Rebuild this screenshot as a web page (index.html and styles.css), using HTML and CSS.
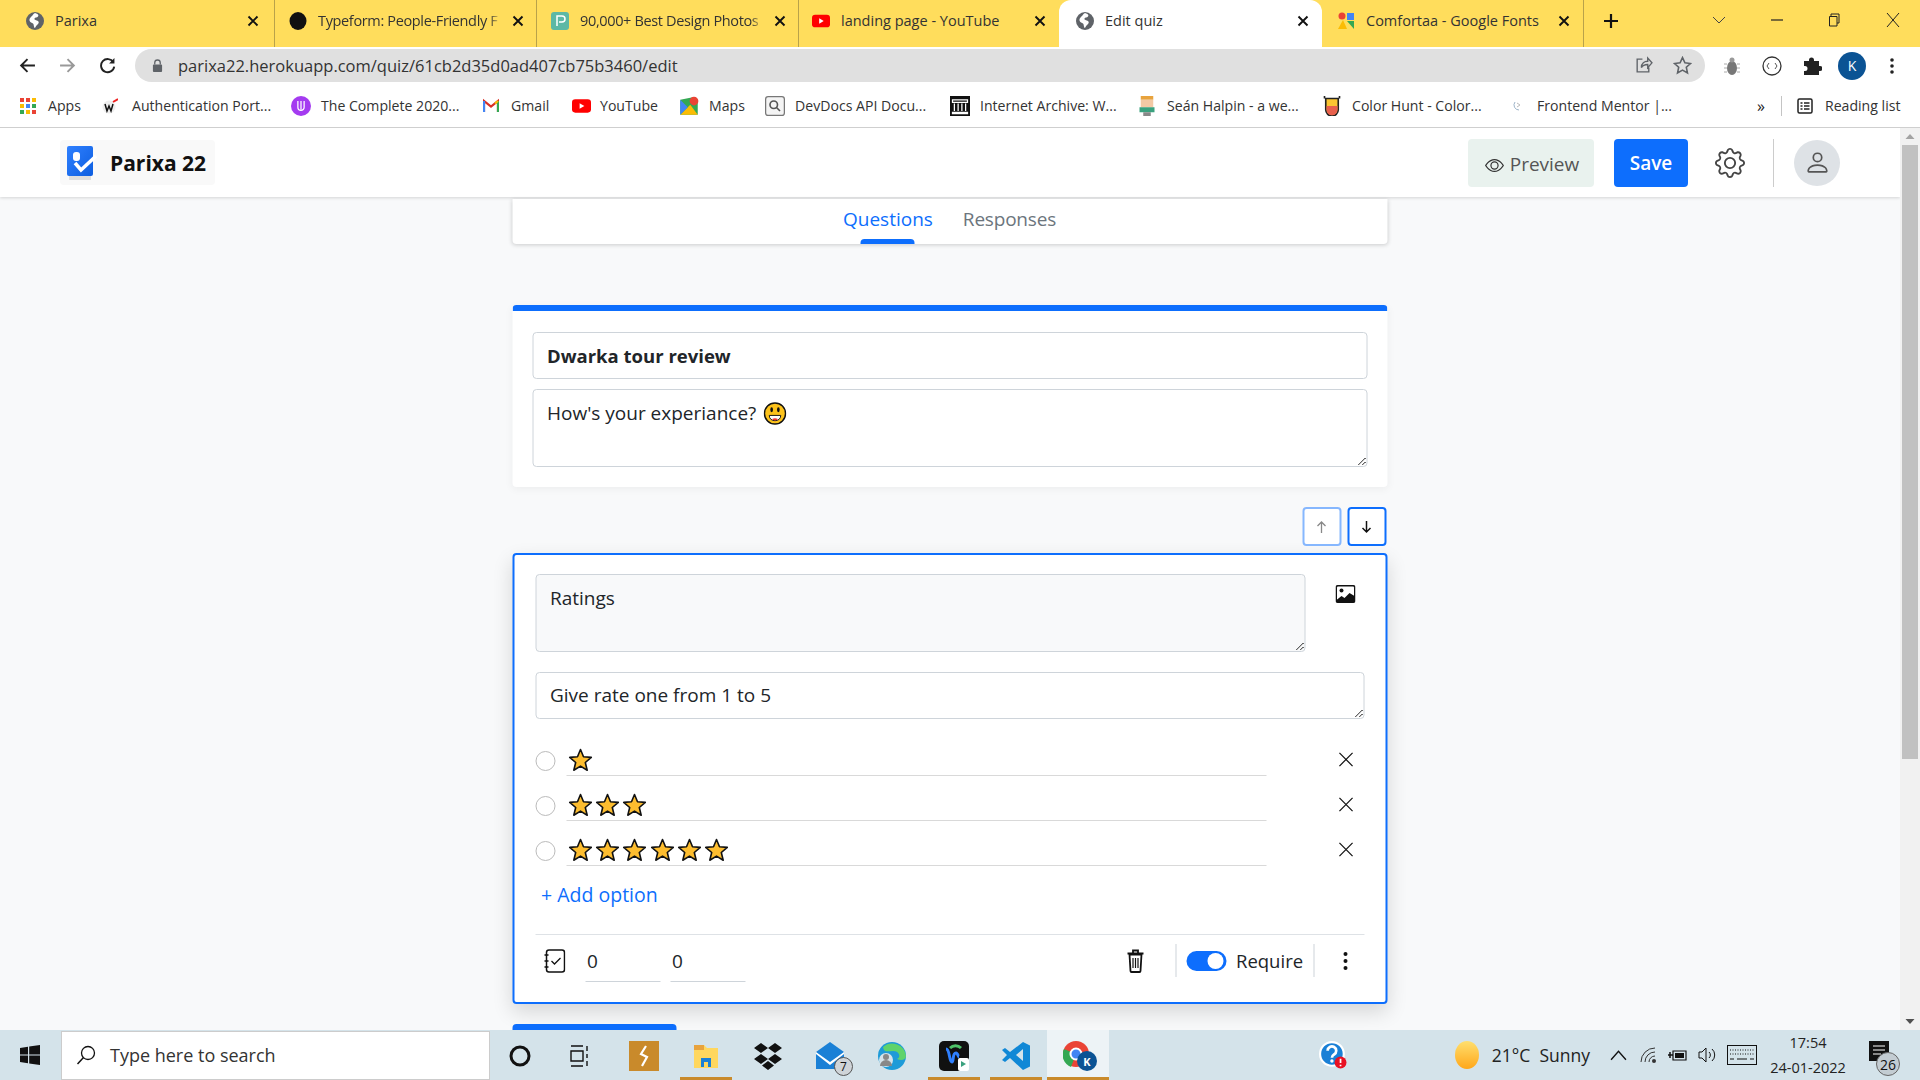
FILE: index.html
```html
<!DOCTYPE html>
<html lang="en">
<head>
<meta charset="utf-8">
<title>Edit quiz</title>
<link rel="stylesheet" href="styles.css">
</head>
<body>
<svg class="defs" aria-hidden="true">
  <symbol id="globe" viewBox="0 0 18 18"><circle cx="9" cy="9" r="9" fill="#5f6368"/><path d="M9 1c3 1 4 2 3 3.500s-3 .5-3.500 2 2 1.500 3.500 2.500.5 3-1 4-1.500 3-2.500 3c-1-2-.5-3.500-1.500-4.500s-3-1-3.500-3S5 5 6 4s1-2 3-3z" fill="#fff"/></symbol>
  <symbol id="tabx" viewBox="0 0 12 12"><path d="M1.500 1.500l9 9m0-9l-9 9" stroke="#111" stroke-width="1.900" fill="none"/></symbol>
  <symbol id="yt" viewBox="0 0 20 14"><rect width="20" height="14" rx="3.500" fill="#f00"/><path d="M8 4l5 3-5 3z" fill="#fff"/></symbol>
  <symbol id="star" viewBox="0 0 24 24"><path d="M12 1.500l3 7.300 7.800.6-6 5.100 1.900 7.700L12 18.100 5.300 22.200l1.900-7.700-6-5.100 7.800-.6z" fill="#fdbd2f" stroke="#111" stroke-width="1.600" stroke-linejoin="round"/></symbol>
  <symbol id="cross" viewBox="0 0 16 16"><path d="M1 1l14 14m0-14L1 15" stroke="#111" stroke-width="1.300" fill="none"/></symbol>
</svg>

<div class="tabstrip">
  <div class="tab tab-first"><svg class="tabicon"><use href="#globe"/></svg><span class="tabtitle">Parixa</span><svg class="tabclose"><use href="#tabx"/></svg></div>
  <div class="tab tab-fade"><svg class="tabicon" viewBox="0 0 18 18"><ellipse cx="9" cy="9" rx="8.500" ry="9" fill="#111"/></svg><span class="tabtitle">Typeform: People-Friendly F</span><svg class="tabclose"><use href="#tabx"/></svg></div>
  <div class="tab tab-fade"><svg class="tabicon" viewBox="0 0 18 18"><rect width="18" height="18" rx="3" fill="#5cb8a5"/><path d="M6 14V4h5a3 3 0 0 1 0 6H8" stroke="#fff" stroke-width="1.500" fill="none"/></svg><span class="tabtitle">90,000+ Best Design Photos</span><svg class="tabclose"><use href="#tabx"/></svg></div>
  <div class="tab tab-short"><svg class="tabicon"><use href="#yt"/></svg><span class="tabtitle">landing page - YouTube</span><svg class="tabclose"><use href="#tabx"/></svg></div>
  <div class="tab tab-active"><svg class="tabicon"><use href="#globe"/></svg><span class="tabtitle">Edit quiz</span><svg class="tabclose"><use href="#tabx"/></svg></div>
  <div class="tab tab-last"><svg class="tabicon" viewBox="0 0 18 18"><path d="M1 17L6 8l4 9z" fill="#fbbc04"/><circle cx="5" cy="4" r="3.500" fill="#ea4335"/><rect x="10" y="1" width="7" height="7" fill="#4285f4"/><path d="M10 9h7v8z" fill="#34a853"/></svg><span class="tabtitle">Comfortaa - Google Fonts</span><svg class="tabclose"><use href="#tabx"/></svg></div>
  <div class="newtab"><svg class="ic16" viewBox="0 0 16 16"><path d="M8 1v14M1 8h14" stroke="#111" stroke-width="2.200"/></svg></div>
  <div class="winctl">
    <svg class="ic14" viewBox="0 0 14 14"><path d="M1 4l6 6 6-6" stroke="#444" fill="none"/></svg>
    <svg class="ic14" viewBox="0 0 14 14"><path d="M1 7h12" stroke="#222" stroke-width="1.200"/></svg>
    <svg class="ic14" viewBox="0 0 14 14"><path d="M3 3V1h8v9H9M1.500 3.500h7.500v9.500H1.500z" stroke="#222" fill="none"/></svg>
    <svg class="ic14" viewBox="0 0 14 14"><path d="M1 0l12 14M13 0L1 14" stroke="#222" fill="none"/></svg>
  </div>
</div>

<div class="toolbar">
  <svg class="navicon" viewBox="0 0 16 16"><path d="M15 8H2M8 2L2 8l6 6" stroke="#222" stroke-width="1.800" fill="none"/></svg>
  <svg class="navicon" viewBox="0 0 16 16"><path d="M1 8h13M8 2l6 6-6 6" stroke="#999" stroke-width="1.800" fill="none"/></svg>
  <svg class="navicon" viewBox="0 0 16 16"><path d="M13.500 5A6.200 6.200 0 1 0 14.300 9" stroke="#222" stroke-width="1.800" fill="none"/><path d="M14.500 1v5h-5z" fill="#222"/></svg>
  <div class="omnibox">
    <svg class="lock" viewBox="0 0 12 14"><path d="M3 6V4a3 3 0 0 1 6 0v2" stroke="#5f6368" stroke-width="1.400" fill="none"/><rect x="1" y="6" width="10" height="8" rx="1" fill="#5f6368"/></svg>
    <span class="url">parixa22.herokuapp.com/quiz/61cb2d35d0ad407cb75b3460/edit</span>
    <svg class="omniicon" viewBox="0 0 18 18"><path d="M8 3H3v12h11v-4M7 11c0-4 3-6 6-6V2l4 4.500L13 11V8c-3 0-5 1-6 3z" stroke="#5f6368" stroke-width="1.300" fill="none"/></svg>
    <svg class="omniicon" viewBox="0 0 18 18"><path d="M9 1.500l2.300 5 5.200.6-3.900 3.500 1.100 5.400L9 13.300 4.300 16l1.100-5.400L1.500 7.100l5.200-.6z" stroke="#5f6368" stroke-width="1.500" fill="none"/></svg>
  </div>
  <div class="exts">
    <svg class="ic20" viewBox="0 0 20 20"><ellipse cx="10" cy="12" rx="5" ry="7" fill="#777"/><circle cx="10" cy="4" r="2.500" fill="#999"/><path d="M2 8h3M2 12h3M2 16h3M15 8h3M15 12h3M15 16h3" stroke="#aaa"/></svg>
    <svg class="ic20" viewBox="0 0 20 20"><circle cx="10" cy="10" r="9" stroke="#333" stroke-width="1.300" fill="#fff"/><path d="M7 7l-2 3 2 3M13 7l2 3-2 3" stroke="#555" fill="none"/></svg>
    <svg class="ic20" viewBox="0 0 20 20"><path d="M2 5h5V4a2.500 2.500 0 0 1 5 0v1h5v5h1a2.500 2.500 0 0 1 0 5h-1v4H2v-4h1a2.500 2.500 0 0 0 0-5H2z" fill="#222"/></svg>
    <span class="profile">K</span>
    <svg class="ic20" viewBox="0 0 20 20"><circle cx="10" cy="4" r="1.800" fill="#222"/><circle cx="10" cy="10" r="1.800" fill="#222"/><circle cx="10" cy="16" r="1.800" fill="#222"/></svg>
  </div>
</div>

<div class="bookmarks">
  <div class="bm"><svg class="bmicon" viewBox="0 0 16 16"><path d="M0 0h4v4H0z" fill="#ea4335"/><path d="M6 0h4v4H6z" fill="#ea4335"/><path d="M12 0h4v4h-4z" fill="#fbbc04"/><path d="M0 6h4v4H0z" fill="#fbbc04"/><path d="M6 6h4v4H6z" fill="#4285f4"/><path d="M12 6h4v4h-4z" fill="#34a853"/><path d="M0 12h4v4H0z" fill="#34a853"/><path d="M6 12h4v4H6z" fill="#fbbc04"/><path d="M12 12h4v4h-4z" fill="#ea4335"/></svg><span>Apps</span></div>
  <div class="bm"><svg class="bmicon bm-w" viewBox="0 0 16 16"><circle cx="7" cy="9" r="6.500" fill="#eee"/><path d="M3 6l2 7 2-5 2 5 2-7" stroke="#111" stroke-width="1.500" fill="none"/><path d="M11 4l5-3" stroke="#e22" stroke-width="2"/></svg><span>Authentication Port...</span></div>
  <div class="bm"><svg class="bmicon bm-big" viewBox="0 0 16 16"><circle cx="8" cy="8" r="8" fill="#a43bf0"/><path d="M5.500 4v5a2.500 2.500 0 0 0 5 0V4" stroke="#fff" fill="none"/><path d="M8 4v7" stroke="#fff"/></svg><span>The Complete 2020...</span></div>
  <div class="bm"><svg class="bmicon" viewBox="0 0 16 16"><path d="M1 14V3l7 5.500L15 3v11" stroke="#d93025" stroke-width="2.200" fill="none"/><path d="M1 3v11" stroke="#4285f4" stroke-width="2.200"/><path d="M15 3v11" stroke="#34a853" stroke-width="2.200"/><path d="M12 5.500L15 3" stroke="#fbbc04" stroke-width="2.200"/></svg><span>Gmail</span></div>
  <div class="bm"><svg class="bmyt"><use href="#yt"/></svg><span>YouTube</span></div>
  <div class="bm"><svg class="bmicon bm-big" viewBox="0 0 16 16"><path d="M1 3l10-2 4 2v12L1 15z" fill="#34a853"/><path d="M1 15L9 7l6 8z" fill="#fbbc04"/><path d="M1 3l6 6-6 6z" fill="#4285f4"/><circle cx="12" cy="4" r="3.500" fill="#ea4335"/></svg><span>Maps</span></div>
  <div class="bm"><svg class="bmicon bm-big" viewBox="0 0 16 16"><rect x=".5" y=".5" width="15" height="15" rx="2" fill="#f4f4f4" stroke="#777"/><circle cx="7" cy="7" r="3" fill="none" stroke="#555" stroke-width="1.300"/><path d="M9 9l3 3" stroke="#555" stroke-width="1.300"/></svg><span>DevDocs API Docu...</span></div>
  <div class="bm"><svg class="bmicon bm-big" viewBox="0 0 16 16"><rect width="16" height="16" fill="#111"/><path d="M2 3h12v2H2zM2 13h12v1H2zM3.500 6v6M6.500 6v6M9.500 6v6M12.500 6v6" stroke="#fff" fill="none"/></svg><span>Internet Archive: W...</span></div>
  <div class="bm"><svg class="bmicon bm-big" viewBox="0 0 16 16"><rect x="3" y="0" width="10" height="3" fill="#e8a33d"/><rect x="3" y="3" width="10" height="6" fill="#f3c9a5"/><rect x="2" y="9" width="12" height="4" fill="#3aa17e"/><rect x="5" y="13" width="6" height="3" fill="#888"/></svg><span>Seán Halpin - a we...</span></div>
  <div class="bm"><svg class="bmicon bm-big" viewBox="0 0 16 16"><path d="M3 2h10v9a5 5 0 0 1-10 0z" fill="#fbc531" stroke="#222" stroke-width="1.300"/><path d="M3.600 8h8.800v3a4.400 4.400 0 0 1-8.800 0z" fill="#e8604c"/><path d="M2 0v2M14 0v2" stroke="#222" stroke-width="1.300"/></svg><span>Color Hunt - Color...</span></div>
  <div class="bm"><svg class="bmicon" viewBox="0 0 16 16"><path d="M6 4a5 5 0 0 0 4 8" stroke="#9db4c9" fill="none"/><path d="M8 5l3 2-3 2" stroke="#bbb" fill="none"/></svg><span>Frontend Mentor |...</span></div>
  <div class="bmmore">»</div>
  <div class="bmdiv"></div>
  <div class="bm bm-read"><svg class="bmicon" viewBox="0 0 16 16"><rect x="1" y="1" width="14" height="14" rx="1.500" fill="none" stroke="#222" stroke-width="1.500"/><path d="M3.500 5h2M7 5h5.500M3.500 8h2M7 8h5.500M3.500 11h2M7 11h5.500" stroke="#222" stroke-width="1.400"/></svg><span>Reading list</span></div>
</div>

<div class="viewport">
  <div class="page">
    <header class="apphead">
      <div class="brand">
        <svg class="logo" viewBox="0 0 30 34"><defs><linearGradient id="lg" x1="0" y1="0" x2="1" y2="1"><stop offset="0" stop-color="#2f80ff"/><stop offset="1" stop-color="#0d5ee0"/></linearGradient></defs><rect x="2" y="29" width="22" height="5" fill="#ccc" opacity=".6"/><path d="M0 2a2 2 0 0 1 2-2h22a2 2 0 0 1 2 2v26a2 2 0 0 1-2 2H2a2 2 0 0 1-2-2z" fill="url(#lg)"/><rect x="6" y="6" width="7" height="9" rx="3" fill="#fff"/><path d="M8 17l6 7L29 10" stroke="#fff" stroke-width="3.500" fill="none"/></svg>
        <span class="brandname">Parixa 22</span>
      </div>
      <div class="headactions">
        <button class="btn-preview"><svg class="eye" viewBox="0 0 16 16"><path fill="#333" d="M16 8s-3-5.500-8-5.500S0 8 0 8s3 5.500 8 5.500S16 8 16 8zM1.173 8a13.133 13.133 0 0 1 1.660-2.043C4.120 4.668 5.880 3.500 8 3.500c2.120 0 3.879 1.168 5.168 2.457A13.133 13.133 0 0 1 14.828 8c-.058.087-.122.183-.195.288-.335.480-.830 1.120-1.465 1.755C11.879 11.332 10.119 12.500 8 12.500c-2.120 0-3.879-1.168-5.168-2.457A13.134 13.134 0 0 1 1.172 8z"/><path fill="#333" d="M8 5.500a2.500 2.500 0 1 0 0 5 2.500 2.500 0 0 0 0-5zM4.500 8a3.500 3.500 0 1 1 7 0 3.500 3.500 0 0 1-7 0z"/></svg><span>Preview</span></button>
        <button class="btn-save">Save</button>
        <svg class="gear" viewBox="0 0 16 16"><path fill="#444" d="M8 4.754a3.246 3.246 0 1 0 0 6.492 3.246 3.246 0 0 0 0-6.492zM5.754 8a2.246 2.246 0 1 1 4.492 0 2.246 2.246 0 0 1-4.492 0z"/><path fill="#444" d="M9.796 1.343c-.527-1.790-3.065-1.790-3.592 0l-.094.319a.873.873 0 0 1-1.255.520l-.292-.160c-1.640-.892-3.433.902-2.540 2.541l.159.292a.873.873 0 0 1-.520 1.255l-.319.094c-1.790.527-1.790 3.065 0 3.592l.319.094a.873.873 0 0 1 .520 1.255l-.160.292c-.892 1.640.901 3.434 2.541 2.540l.292-.159a.873.873 0 0 1 1.255.520l.094.319c.527 1.790 3.065 1.790 3.592 0l.094-.319a.873.873 0 0 1 1.255-.520l.292.160c1.640.893 3.434-.902 2.540-2.541l-.159-.292a.873.873 0 0 1 .520-1.255l.319-.094c1.790-.527 1.790-3.065 0-3.592l-.319-.094a.873.873 0 0 1-.520-1.255l.160-.292c.893-1.640-.902-3.433-2.541-2.540l-.292.159a.873.873 0 0 1-1.255-.520l-.094-.319zm-2.633.283c.246-.835 1.428-.835 1.674 0l.094.319a1.873 1.873 0 0 0 2.693 1.115l.291-.160c.764-.415 1.600.420 1.184 1.185l-.159.292a1.873 1.873 0 0 0 1.116 2.692l.318.094c.835.246.835 1.428 0 1.674l-.319.094a1.873 1.873 0 0 0-1.115 2.693l.160.291c.415.764-.420 1.600-1.185 1.184l-.291-.159a1.873 1.873 0 0 0-2.693 1.116l-.094.318c-.246.835-1.428.835-1.674 0l-.094-.319a1.873 1.873 0 0 0-2.692-1.115l-.292.160c-.764.415-1.600-.420-1.184-1.185l.159-.291A1.873 1.873 0 0 0 1.945 8.930l-.319-.094c-.835-.246-.835-1.428 0-1.674l.319-.094A1.873 1.873 0 0 0 3.060 4.377l-.160-.292c-.415-.764.420-1.600 1.185-1.184l.292.159a1.873 1.873 0 0 0 2.692-1.115l.094-.319z"/></svg>
        <span class="headdiv"></span>
        <span class="avatar"><svg class="person" viewBox="0 0 16 16"><path fill="#555" d="M8 8a3 3 0 1 0 0-6 3 3 0 0 0 0 6zm2-3a2 2 0 1 1-4 0 2 2 0 0 1 4 0zm4 8c0 1-1 1-1 1H3s-1 0-1-1 1-4 6-4 6 3 6 4zm-1-.004c-.001-.246-.154-.986-.832-1.664C11.516 10.680 10.289 10 8 10c-2.290 0-3.516.680-4.168 1.332-.678.678-.830 1.418-.832 1.664h10z"/></svg></span>
      </div>
    </header>

    <main class="column">
      <nav class="qtabs">
        <span class="qtab qtab-on">Questions</span>
        <span class="qtab">Responses</span>
      </nav>

      <section class="card titlecard">
        <div class="field field-title">Dwarka tour review</div>
        <div class="field field-desc grip"><span>How's your experiance?</span>
          <svg class="emoji" viewBox="0 0 24 24"><circle cx="12" cy="12" r="11" fill="#fcc21b" stroke="#111" stroke-width="1.500"/><ellipse cx="8.500" cy="8" rx="1.400" ry="2.600" fill="#111"/><ellipse cx="15.500" cy="8" rx="1.400" ry="2.600" fill="#111"/><path d="M6 14h12c0 3.500-2.500 5.500-6 5.500S6 17.500 6 14z" fill="#fff" stroke="#111"/><path d="M9 17.800c1.800-1 4.200-1 6 0-.8 1-1.800 1.500-3 1.500s-2.200-.5-3-1.500z" fill="#e33"/></svg>
        </div>
      </section>

      <div class="movebtns">
        <button class="mv mv-off"><svg class="mvicon" viewBox="0 0 12 14"><path d="M6 13V2M2 6l4-4 4 4" stroke="#888" stroke-width="1.300" fill="none"/></svg></button>
        <button class="mv"><svg class="mvicon" viewBox="0 0 12 14"><path d="M6 1v11M2 8l4 4 4-4" stroke="#111" stroke-width="1.500" fill="none"/></svg></button>
      </div>

      <section class="card qcard">
        <div class="qtop">
          <div class="field field-q grip">Ratings</div>
          <svg class="imgicon" viewBox="0 0 20 18"><rect width="20" height="18" rx="2" fill="#111"/><rect x="1.500" y="1.500" width="17" height="15" rx="1" fill="#fff"/><circle cx="6" cy="5.500" r="2" fill="#111"/><path d="M1 15l5-4 3 2 5-5 5 3v6H1z" fill="#111"/></svg>
        </div>
        <div class="field field-sub grip">Give rate one from 1 to 5</div>

        <div class="opts">
          <div class="opt"><span class="radio"></span><div class="optline"><svg class="star"><use href="#star"/></svg></div><svg class="optx"><use href="#cross"/></svg></div>
          <div class="opt"><span class="radio"></span><div class="optline"><svg class="star"><use href="#star"/></svg><svg class="star"><use href="#star"/></svg><svg class="star"><use href="#star"/></svg></div><svg class="optx"><use href="#cross"/></svg></div>
          <div class="opt"><span class="radio"></span><div class="optline"><svg class="star"><use href="#star"/></svg><svg class="star"><use href="#star"/></svg><svg class="star"><use href="#star"/></svg><svg class="star"><use href="#star"/></svg><svg class="star"><use href="#star"/></svg><svg class="star"><use href="#star"/></svg></div><svg class="optx"><use href="#cross"/></svg></div>
        </div>
        <div class="addopt">+ Add option</div>

        <footer class="qfoot">
          <svg class="journal" viewBox="0 0 22 24"><rect x="3" y="1" width="18" height="22" rx="2.500" fill="none" stroke="#111" stroke-width="1.500"/><path d="M1 6h4M1 12h4M1 18h4" stroke="#111" stroke-width="1.500"/><path d="M8 12l3 3 6-6" stroke="#111" stroke-width="1.300" fill="none"/></svg>
          <span class="score">0</span>
          <span class="score">0</span>
          <svg class="trash" viewBox="0 0 20 24"><path d="M2 4.500h16M7.500 4V1.500h5V4" stroke="#111" stroke-width="1.800" fill="none"/><path d="M4 5.500l1 16.500a1 1 0 0 0 1 1h8a1 1 0 0 0 1-1l1-16.500z" fill="none" stroke="#111" stroke-width="1.800"/><path d="M7.500 9v10M10 9v10M12.500 9v10" stroke="#111" stroke-width="1.200"/></svg>
          <span class="footdiv"></span>
          <span class="toggle"><span class="knob"></span></span>
          <span class="reqlabel">Require</span>
          <span class="footdiv"></span>
          <svg class="dots" viewBox="0 0 6 20"><circle cx="3" cy="3" r="2" fill="#111"/><circle cx="3" cy="10" r="2" fill="#111"/><circle cx="3" cy="17" r="2" fill="#111"/></svg>
        </footer>
      </section>

      <div class="nextcard"></div>
    </main>
  </div>
  <div class="scrollbar">
    <svg class="sbarrow" viewBox="0 0 19 17"><path d="M5 11l4.500-5 4.500 5z" fill="#a3a3a3"/></svg>
    <div class="sbthumb"></div>
    <div class="sbfill"></div>
    <svg class="sbarrow" viewBox="0 0 19 17"><path d="M5 6l4.500 5 4.500-5z" fill="#505050"/></svg>
  </div>
</div>

<div class="taskbar">
  <svg class="winlogo" viewBox="0 0 20 20"><path d="M0 3l8-1.200V9.500H0zM9.200 1.600L20 0v9.500H9.200zM0 10.500h8v7.700L0 17zM9.200 10.500H20V20L9.200 18.400z" fill="#111"/></svg>
  <div class="search">
    <svg class="searchicon" viewBox="0 0 20 20"><circle cx="12" cy="8" r="6.500" fill="none" stroke="#111" stroke-width="1.300"/><path d="M7.500 12.500L1.500 19" stroke="#111" stroke-width="1.500"/></svg>
    <span>Type here to search</span>
  </div>
  <div class="tbapps">
    <div class="tbapp"><svg class="tbi" viewBox="0 0 24 24"><circle cx="12" cy="12" r="9" fill="none" stroke="#111" stroke-width="3"/></svg></div>
    <div class="tbapp"><svg class="tbi tbi-task" viewBox="0 0 24 24"><path d="M4 2h12M4 22h12M4 7h12v10H4zM20 2v5M20 10v4M20 17v5" stroke="#111" stroke-width="1.400" fill="none"/></svg></div>
    <div class="tbapp"><svg class="tbi tbi-lg" viewBox="0 0 30 30"><rect width="30" height="30" fill="#c98a2b"/><path d="M17 5l-5 8 6 3-5 9" stroke="#fff" stroke-width="2.200" fill="none"/></svg></div>
    <div class="tbapp tbapp-open"><svg class="tbi tbi-lg" viewBox="0 0 30 30"><path d="M3 4h10l3 3h11v20H3z" fill="#ffd75e"/><path d="M3 4h10v5H3z" fill="#e8a33d"/><path d="M10 26v-9h10v9h-3v-5h-4v5z" fill="#1a80d6"/></svg></div>
    <div class="tbapp"><svg class="tbi tbi-lg" viewBox="0 0 30 30"><path d="M8 2l7 5-7 5-7-5zM22 2l7 5-7 5-7-5zM8 13l7 5-7 5-7-5zM22 13l7 5-7 5-7-5zM15 20l6 4.500L15 29l-6-4.500z" fill="#111"/></svg></div>
    <div class="tbapp"><svg class="tbi tbi-lg" viewBox="0 0 30 30"><path d="M1 11L15 1l14 10v17H1z" fill="#1a80d6"/><path d="M1 11l14 10 14-10v2L15 24 1 13z" fill="#fff"/></svg><span class="tbbadge">7</span></div>
    <div class="tbapp"><svg class="tbi tbi-lg" viewBox="0 0 30 30"><circle cx="15" cy="15" r="14" fill="#1e9bd8"/><path d="M6 6a14 14 0 0 1 23 9c0 4-5 5-9 3 4-1 3-8-4-8-5 0-9 2-10-4z" fill="#5fd36b"/><circle cx="9" cy="19" r="7" fill="#d5e3ea"/><circle cx="9" cy="16" r="3" fill="#888"/><path d="M3 25a6 6 0 0 1 12 0z" fill="#888"/></svg></div>
    <div class="tbapp tbapp-open"><svg class="tbi tbi-lg" viewBox="0 0 30 30"><rect width="30" height="30" rx="5" fill="#111"/><path d="M7 8c4 0 3 13 6 13 2 0 0-9 4-9 2 0 2 4 3 4" stroke="#2f80ff" stroke-width="3" fill="none"/><path d="M11 7a8 8 0 0 1 11 0" stroke="#4fc46a" stroke-width="3" fill="none"/><rect x="19" y="17" width="11" height="13" rx="2" fill="#fff"/><path d="M22 20l5 3-5 3z" fill="#3aa17e"/></svg></div>
    <div class="tbapp tbapp-open"><svg class="tbi tbi-lg" viewBox="0 0 30 30"><path d="M22 1l7 3.500v21L22 29 9 17l-5 4-3-2 5-5-5-5 3-2 5 4zM22 8l-7 6 7 6z" fill="#1088d6"/></svg></div>
    <div class="tbapp tbapp-open tbapp-active"><svg class="tbi tbi-lg" viewBox="0 0 30 30"><circle cx="13" cy="13" r="13" fill="#ea4335"/><path d="M13 13L1 8a13 13 0 0 0 7 18z" fill="#34a853"/><path d="M13 13h13a13 13 0 0 1-10 12z" fill="#fbbc04"/><circle cx="13" cy="13" r="5.500" fill="#4285f4" stroke="#fff" stroke-width="2"/></svg><span class="tbk">K</span></div>
  </div>
  <svg class="help" viewBox="0 0 26 26"><circle cx="12" cy="12" r="11" fill="#1a80d6" stroke="#fff" stroke-width="2"/><path d="M8 9a4 4 0 1 1 6 3.500c-1.500 1-2 1.500-2 3" stroke="#fff" stroke-width="2.500" fill="none"/><circle cx="12" cy="18.500" r="1.600" fill="#fff"/><circle cx="20" cy="20" r="5.500" fill="#e81123"/><path d="M20 16.500v4M20 22v1.500" stroke="#fff" stroke-width="1.600"/></svg>
  <div class="tray">
    <span class="sun"></span>
    <span class="weather">21°C&nbsp; Sunny</span>
    <svg class="caret" viewBox="0 0 16 10"><path d="M1 9l7-8 7 8" stroke="#111" stroke-width="1.300" fill="none"/></svg>
    <svg class="trayi" viewBox="0 0 20 20"><path d="M2 17A14 14 0 0 1 16 3M6 17A10 10 0 0 1 16 7M10 17a6 6 0 0 1 6-6" stroke="#333" fill="none"/><circle cx="15" cy="16" r="2" fill="#333"/></svg>
    <svg class="trayi" viewBox="0 0 20 20"><path d="M5 6h13v9H5z" fill="none" stroke="#111" stroke-width="1.200"/><path d="M7 8h9v5H7z" fill="#111"/><path d="M0 10h5M2 7v6" stroke="#111" stroke-width="1.500"/></svg>
    <svg class="trayi" viewBox="0 0 20 20"><path d="M2 7h3l4-4v14l-4-4H2z" fill="none" stroke="#111"/><path d="M12 7a4 4 0 0 1 0 6M15 4a8 8 0 0 1 0 12" stroke="#111" fill="none"/></svg>
    <svg class="kbd" viewBox="0 0 30 20"><rect x=".5" y=".5" width="29" height="19" fill="none" stroke="#111"/><path d="M3 5h24M3 9h24" stroke="#111" stroke-dasharray="1 1.500"/><path d="M3 14h4M10 14h10M23 14h4" stroke="#111"/></svg>
    <div class="clock"><span>17:54</span><span>24-01-2022</span></div>
    <div class="notif">
      <svg class="notifbox" viewBox="0 0 20 20"><rect width="20" height="20" fill="#111"/><path d="M4 5h12M4 9h12M4 13h8" stroke="#fff" stroke-width="1.200"/></svg>
      <span class="notifbadge">26</span>
    </div>
  </div>
</div>
</body>
</html>
```

FILE: styles.css
```css
* { box-sizing: border-box; }
html, body { margin: 0; height: 100%; overflow: hidden; }
body {
  width: 1920px; height: 1080px;
  display: flex; flex-direction: column;
  font-family: "Open Sans", "Noto Sans", "Liberation Sans", sans-serif;
  color: #212529; background: #fff;
}
.defs { width: 0; height: 0; position: absolute; }
svg { display: block; flex: none; }
button { font: inherit; border: 0; padding: 0; }

/* browser tabs */
.tabstrip { height: 47px; background: #ffdd5c; display: flex; padding-left: 13px; flex: none; }
.tab { width: 262px; height: 47px; display: flex; align-items: center; padding: 0 13px 6px 13px; border-right: 1px solid #b9a24a; background-clip: padding-box; font-size: 14.500px; color: #333; gap: 11px; }
.tab-first { padding-right: 15px; }
.tab-fade { padding-left: 14px; padding-right: 12px; letter-spacing: -.35px; }
.tab-short { width: 260px; border-right: 0; }
.tab-active { width: 263px; background: #fff; border: 0; border-radius: 12px 12px 0 0; padding-left: 17px; padding-right: 13px; }
.tab-last { width: 262px; padding-left: 15px; }
.tabicon { width: 18px; height: 18px; }
.tabtitle { flex: 1; min-width: 0; white-space: nowrap; }
.tab-fade .tabtitle { -webkit-mask-image: linear-gradient(to left, transparent 0, #000 12px); mask-image: linear-gradient(to left, transparent 0, #000 12px); }
.tabclose { width: 12px; height: 12px; }
.newtab { width: 54px; display: flex; justify-content: center; align-items: center; padding-bottom: 6px; }
.ic16 { width: 16px; height: 16px; }
.winctl { display: flex; margin-left: 74px; gap: 44px; align-items: center; padding-bottom: 8px; }
.ic14 { width: 14px; height: 14px; }

/* toolbar */
.toolbar { height: 37px; display: flex; align-items: center; padding-left: 19px; flex: none; background: #fff; }
.navicon { width: 17px; height: 17px; margin-right: 23px; }
.omnibox { margin-left: -4px; width: 1570px; height: 33px; background: #e0e0e0; border-radius: 17px; display: flex; align-items: center; padding: 0 13px 0 17px; }
.lock { width: 11px; height: 13px; margin-right: 15px; }
.url { flex: 1; font-size: 16.500px; color: #333; }
.omniicon { width: 19px; height: 19px; margin-left: 20px; }
.exts { display: flex; align-items: center; margin-left: 17px; gap: 20px; }
.ic20 { width: 20px; height: 20px; }
.profile { width: 28px; height: 28px; border-radius: 50%; background: #0b5394; color: #fff; font-size: 14px; display: flex; align-items: center; justify-content: center; margin: 0 -4px; }

/* bookmarks */
.bookmarks { height: 44px; border-bottom: 1px solid #cfcfcf; display: grid; align-items: center; padding-left: 20px; flex: none; font-size: 14.100px; color: #333;
  grid-template-columns: 84px 189px 190px 89px 109px 86px 185px 187px 185px 185px 248px 24px 16px auto; background: #fff; }
.bm { display: flex; align-items: center; gap: 12px; white-space: nowrap; }
.bmicon { width: 16px; height: 16px; }
.bm-w { margin-left: -2px; margin-right: 2px; }
.bm-big { width: 20px; height: 20px; margin: 0 -2px; }
.bmyt { width: 19px; height: 14px; margin-right: -3px; }
.bmmore { font-size: 16px; color: #222; }
.bmdiv { width: 1px; height: 20px; background: #c4c4c4; }

/* page */
.viewport { flex: 1; min-height: 0; display: flex; background: #f8f9fa; }
.page { flex: 1; min-width: 0; overflow: hidden; }
.apphead { height: 69px; background: #fff; box-shadow: 0 1px 3px rgba(0,0,0,.15); display: flex; align-items: center; justify-content: space-between; padding: 0 60px 0 60px; position: relative; }
.brand { width: 155px; height: 45px; background: #f9f9f9; border-radius: 4px; display: flex; align-items: center; padding-left: 7px; gap: 13px; }
.logo { width: 30px; height: 34px; }
.brandname { font-size: 21px; font-weight: 700; color: #111; white-space: nowrap; }
.headactions { display: flex; align-items: center; }
.btn-preview { width: 126px; height: 48px; background: #e9f2ee; border-radius: 4px; font-size: 19px; color: #555; display: flex; align-items: center; justify-content: center; gap: 6px; padding: 2px 0 0 2px; }
.eye { width: 19px; height: 19px; margin-top: 3px; }
.btn-save { width: 74px; height: 48px; background: #0d6efd; border-radius: 4px; color: #fff; font-size: 19px; font-weight: 600; margin-left: 20px; }
.gear { width: 30px; height: 30px; margin-left: 27px; }
.headdiv { width: 1px; height: 48px; background: #ccc; margin-left: 28px; }
.avatar { width: 46px; height: 46px; border-radius: 50%; background: #dee2e6; margin-left: 20px; display: flex; align-items: center; justify-content: center; }
.person { width: 27px; height: 27px; }

.column { width: 875px; margin: 0 auto; transform: translateX(-.5px); }
.qtabs { height: 45px; margin-top: 2px; background: #fff; border-radius: 0 0 4px 4px; box-shadow: 0 1px 4px rgba(0,0,0,.18); display: flex; justify-content: center; gap: 30px; padding-top: 7px; }
.qtab { font-size: 19px; letter-spacing: -.2px; color: #6c757d; height: 38px; position: relative; }
.qtab-on { color: #0d6efd; font-weight: 500; letter-spacing: 0; }
.qtab-on::after { content: ""; position: absolute; left: 18px; right: 18px; bottom: 0; height: 5px; background: #0d6efd; border-radius: 4px 4px 0 0; }

.card { background: #fff; border-radius: 4px; }
.titlecard { margin-top: 61px; border-top: 6px solid #0d6efd; padding: 21px 20px 20px; box-shadow: 0 2px 8px rgba(0,0,0,.05); }
.field { border: 1px solid #ced4da; border-radius: 4px; background: #fff; font-size: 19px; padding: 7px 13px 7px 14px; overflow: hidden; }
.grip { resize: vertical; }
.field-title { height: 47px; font-size: 18.500px; font-weight: 700; display: flex; align-items: center; padding-top: 4px; padding-bottom: 4px; }
.field-desc { height: 78px; margin-top: 10px; display: flex; align-items: flex-start; gap: 7px; padding-top: 10px; }
.emoji { width: 23px; height: 23px; margin-top: 2px; }

.movebtns { display: flex; justify-content: flex-end; gap: 6px; margin-top: 20px; padding-right: 1px; }
.mv { width: 39px; height: 39px; border: 2px solid #0d6efd; border-radius: 4px; background: #fff; display: flex; align-items: center; justify-content: center; }
.mv-off { border-color: #86b7fe; }
.mvicon { width: 12px; height: 14px; }

.qcard { margin-top: 7px; height: 451px; border: 2px solid #0d6efd; padding: 19px 20px 0 21px; box-shadow: 0 8px 20px rgba(0,0,0,.14); }
.qtop { display: flex; align-items: flex-start; }
.field-q { width: 770px; height: 78px; background: #f8f9fa; padding-top: 10px; }
.imgicon { width: 20px; height: 18px; margin: 11px 0 0 30px; }
.field-sub { width: 829px; height: 47px; margin-top: 20px; padding-top: 9px; }
.opts { margin-top: 12px; display: flex; flex-direction: column; }
.opt { height: 45px; display: flex; align-items: center; }
.radio { width: 20px; height: 20px; border: 1px solid #bbb; border-radius: 50%; background: #fff; margin-top: 15px; }
.optline { width: 700px; height: 45px; margin-left: 11px; border-bottom: 1px solid #d9d9d9; display: flex; align-items: flex-end; padding: 0 0 3px 2px; gap: 3.400px; }
.star { width: 24px; height: 24px; }
.optx { width: 15px; height: 15px; margin-left: 72px; margin-top: 11px; }
.addopt { color: #0d6efd; font-size: 19.500px; margin: 14px 0 0 6px; line-height: 30px; }
.qfoot { margin-top: 24px; width: 829px; border-top: 1px solid #dee2e6; display: flex; align-items: center; height: 52px; padding-left: 8px; }
.journal { width: 22px; height: 24px; }
.score { width: 75px; height: 42px; margin-left: 10px; font-size: 19px; line-height: 42px; padding-left: 2px; border-bottom: 1px solid #ced4da; }
.score:first-of-type { margin-left: 20px; }
.trash { width: 20px; height: 24px; margin-left: 380px; }
.footdiv { width: 1px; height: 33px; background: #ced4da; margin-left: 30px; }
.toggle { width: 40px; height: 20px; border-radius: 10px; background: #0d6efd; margin-left: 10px; position: relative; }
.knob { position: absolute; right: 3px; top: 2px; width: 16px; height: 16px; border-radius: 50%; background: #fff; }
.reqlabel { font-size: 18.500px; margin-left: 10px; width: 67px; white-space: nowrap; }
.reqlabel + .footdiv { margin-left: 10px; }
.dots { width: 6px; height: 20px; margin-left: 28px; }
.nextcard { width: 164px; height: 40px; margin-top: 20px; background: #0d6efd; border-radius: 4px 4px 0 0; }

/* scrollbar */
.scrollbar { width: 20px; background: #f1f1f1; display: flex; flex-direction: column; }
.sbarrow { width: 20px; height: 17px; }
.sbthumb { height: 614px; background: #c1c1c1; margin: 0 2px; }
.sbfill { flex: 1; }

/* taskbar */
.taskbar { height: 50px; flex: none; background: #d4e3ea; display: flex; align-items: center; }
.winlogo { width: 20px; height: 20px; margin-left: 20px; }
.search { width: 429px; height: 49px; margin-left: 21px; background: #fff; border: 1px solid #ccc; display: flex; align-items: center; padding-left: 14px; gap: 14px; font-size: 18px; color: #333; }
.searchicon { width: 20px; height: 20px; }
.tbapps { display: flex; height: 50px; margin-left: -1px; }
.tbapp { width: 62px; height: 50px; display: flex; align-items: center; justify-content: center; position: relative; padding-top: 1px; }
.tbapp-open::after { content: ""; position: absolute; left: 5px; right: 5px; bottom: 0; height: 3px; background: #c98a2b; }
.tbapp-active { background: #edf3f6; }
.tbapp-active::after { left: 0; right: 0; }
.tbi { width: 24px; height: 24px; }
.tbi-task { margin-right: 6px; }
.tbi-lg { width: 30px; height: 30px; }
.tbbadge { position: absolute; right: 8px; bottom: 4px; width: 19px; height: 19px; border-radius: 50%; background: #cfd4d8; border: 1px solid #555; font-size: 12px; color: #111; display: flex; align-items: center; justify-content: center; }
.tbk { position: absolute; left: 30px; top: 21px; width: 20px; height: 20px; border-radius: 50%; background: #0b5394; color: #fff; font-size: 11px; font-weight: 700; display: flex; align-items: center; justify-content: center; }
.help { width: 28px; height: 28px; margin-left: 210px; }
.tray { margin-left: auto; display: flex; align-items: center; height: 50px; padding-right: 17px; }
.sun { width: 24px; height: 28px; border-radius: 50%; background: linear-gradient(#ffdf6e, #ffa71a); }
.weather { font-size: 17.500px; margin-left: 13px; color: #222; white-space: nowrap; }
.caret { width: 17px; height: 11px; margin-left: 20px; }
.trayi { width: 20px; height: 20px; margin-left: 9px; }
.caret + .trayi { margin-left: 12px; }
.kbd { width: 30px; height: 20px; margin-left: 10px; }
.clock { display: flex; flex-direction: column; align-items: center; font-size: 14.500px; line-height: 25px; color: #222; width: 78px; margin-left: 12px; }
.notif { width: 34px; height: 40px; margin-left: 22px; position: relative; }
.notifbox { width: 20px; height: 20px; margin-top: 6px; }
.notifbadge { position: absolute; left: 7px; top: 17px; width: 24px; height: 24px; border-radius: 50%; background: #c3ccd2; border: 1px solid #666; font-size: 14px; display: flex; align-items: center; justify-content: center; color: #111; }
```
